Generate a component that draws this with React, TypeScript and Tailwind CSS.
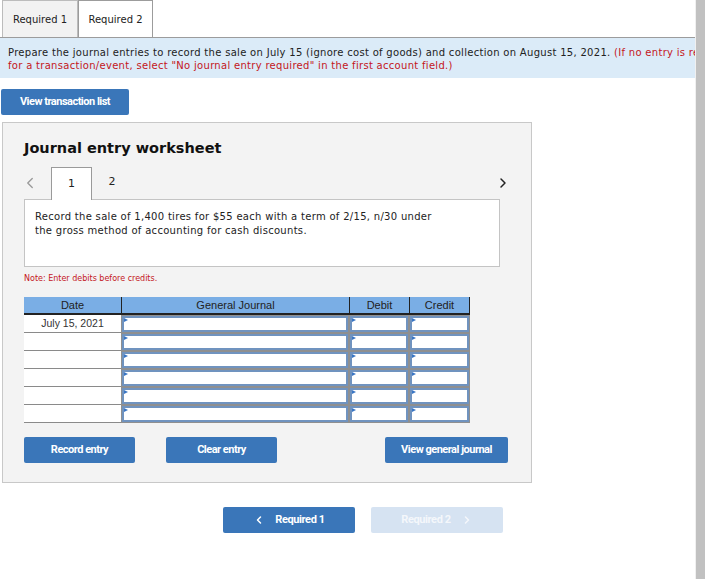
import { ChevronLeft, ChevronRight } from 'lucide-react';

const verdana = { fontFamily: '"DejaVu Sans", Verdana, sans-serif' };
const arial = { fontFamily: '"Liberation Sans", Arial, sans-serif' };
const roboto = { fontFamily: 'Roboto, "Liberation Sans", sans-serif' };

function BlueButton({ label, className }: { label: string; className: string }) {
  return (
    <button
      style={roboto}
      className={`h-[26px] shrink-0 rounded-[2px] bg-[#3a76b9] text-[11px] font-bold tracking-[-0.5px] text-white ${className}`}
    >
      {label}
    </button>
  );
}

function InputCell() {
  return (
    <div className="h-[18px] bg-[#8f8f8f] p-[1px]">
      <div className="relative h-full border-2 border-[#7093bf] bg-white">
        <span className="absolute left-0 top-0 h-0 w-0 border-y-[2.5px] border-l-[4px] border-y-transparent border-l-[#3a76c4]" />
      </div>
    </div>
  );
}

const rows = ['July 15, 2021', '', '', '', '', ''];

export default function App() {
  return (
    <div className="flex h-[579px] w-[705px] overflow-hidden bg-white">
      <div className="flex w-[695px] shrink-0 flex-col items-start" style={verdana}>
        {/* top tabs */}
        <div className="flex h-[38px] w-full items-end border-b border-[#9c9c9c] pl-[2px]">
          <div className="flex h-[37px] w-[76px] items-center justify-center border border-b-0 border-[#bcbcbc] bg-[#f2f2f2] text-[10px] text-[#222]">
            Required 1
          </div>
          <div className="flex h-[37px] w-[75px] items-center justify-center border border-b-0 border-[#9c9c9c] bg-white text-[10px] text-[#222]">
            Required 2
          </div>
        </div>

        {/* instructions (first line runs past the window edge, as in the original) */}
        <div className="h-[40px] w-full overflow-hidden whitespace-nowrap bg-[#dbebf8] px-[8px] pt-[8px] text-[10px] leading-[13px] tracking-[0.3px] text-[#222]">
          Prepare the journal entries to record the sale on July 15 (ignore cost of goods) and collection on August 15, 2021.{' '}
          <span className="text-[#c4161c]">(If no entry is required</span>
          <br />
          <span className="text-[#c4161c]">for a transaction/event, select "No journal entry required" in the first account field.)</span>
        </div>

        <BlueButton label="View transaction list" className="ml-[1px] mt-[11px] h-[24px] w-[128px]" />

        {/* worksheet */}
        <div className="ml-[2px] mt-[7px] h-[361px] w-[530px] border border-[#c8c8c8] bg-[#f3f3f3] pl-[21px]">
          <h2 className="mt-[15px] text-[14.5px] font-bold leading-[20px] text-[#111]">Journal entry worksheet</h2>

          <div className="mt-[8px] flex h-[33px] items-end">
            <div className="flex h-[33px] w-[27px] items-center justify-start">
              <ChevronLeft className="ml-[-3px] h-[18px] w-[18px] text-[#9a9a9a]" strokeWidth={1.8} />
            </div>
            <div className="relative z-10 mb-[-1px] flex h-[33px] w-[41px] items-center justify-center border border-b-0 border-[#9a9a9a] bg-white text-[11px] text-[#222]">
              1
            </div>
            <div className="flex h-[33px] w-[40px] items-center justify-center text-[11px] text-[#222]">2</div>
            <div className="flex h-[33px] w-[379px] items-center justify-end">
              <ChevronRight className="h-[16px] w-[16px] text-[#222]" strokeWidth={2.2} />
            </div>
          </div>

          <div className="h-[68px] w-[476px] border border-[#c4c4c4] bg-white px-[10px] pt-[10px] text-[10px] leading-[14px] tracking-[0.3px] text-[#222]">
            Record the sale of 1,400 tires for $55 each with a term of 2/15, n/30 under
            <br />
            the gross method of accounting for cash discounts.
          </div>

          <p className="mt-[6px] text-[8px] leading-[12px] text-[#c4161c]">Note: Enter debits before credits.</p>

          {/* table */}
          <div className="mt-[12px] w-[446px]" style={arial}>
            <div className="grid h-[18px] grid-cols-[97px_228px_60px_61px] border-b-2 border-[#222] bg-[#7aaee5] text-[11px] leading-[16px] text-[#222]">
              <div className="text-center">Date</div>
              <div className="border-l border-[#222] text-center">General Journal</div>
              <div className="border-l border-[#222] text-center">Debit</div>
              <div className="border-x border-[#222] text-center">Credit</div>
            </div>
            {rows.map((d, i) => (
              <div key={i} className="grid grid-cols-[97px_228px_60px_61px]">
                <div className="h-[18px] border-b border-[#8a8a8a] bg-white text-center text-[10.5px] leading-[17px] text-[#333]">
                  {d}
                </div>
                <InputCell />
                <InputCell />
                <InputCell />
              </div>
            ))}
          </div>

          <div className="mt-[14px] flex">
            <BlueButton label="Record entry" className="w-[111px]" />
            <BlueButton label="Clear entry" className="ml-[31px] w-[111px]" />
            <BlueButton label="View general journal" className="ml-[108px] w-[123px]" />
          </div>
        </div>

        {/* bottom nav */}
        <div className="ml-[223px] mt-[24px] flex gap-[16px]">
          <button
            style={roboto}
            className="flex h-[26px] w-[132px] items-center justify-center gap-[10px] rounded-[2px] bg-[#3a76b9] text-[11px] font-bold tracking-[-0.4px] text-white"
          >
            <ChevronLeft className="h-[12px] w-[12px]" strokeWidth={3} />
            Required 1
          </button>
          <button
            style={roboto}
            className="flex h-[26px] w-[132px] items-center justify-center gap-[10px] rounded-[2px] bg-[#d6e3f2] text-[11px] font-bold tracking-[-0.4px] text-[#f4f7fb]"
          >
            Required 2
            <ChevronRight className="h-[12px] w-[12px]" strokeWidth={3} />
          </button>
        </div>
      </div>

      {/* scrollbar */}
      <div className="w-[1px] bg-[#f0f0f0]" />
      <div className="w-[9px] bg-[#c1c1c1]" />
    </div>
  );
}
